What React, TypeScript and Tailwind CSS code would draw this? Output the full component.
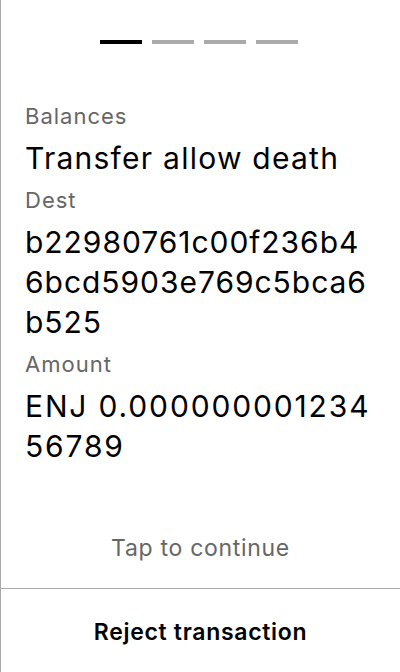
import React from "react";

export default function App() {
  return (
    <div
      className="flex h-[672px] w-[400px] flex-col border-l border-[#aaaaaa] bg-white text-black"
      style={{ fontFamily: "Inter, 'Noto Sans', sans-serif" }}
    >
      <div className="flex justify-center gap-[10px] pr-[3px] pt-10">
        <div className="h-1 w-[42px] bg-black" />
        <div className="h-1 w-[42px] bg-[#aaaaaa]" />
        <div className="h-1 w-[42px] bg-[#aaaaaa]" />
        <div className="h-1 w-[42px] bg-[#aaaaaa]" />
      </div>
      <div className="flex flex-1 flex-col gap-2 px-6 pt-[58px]">
        <div className="text-[22px] leading-[28px] tracking-[1px] text-[#666666]">Balances</div>
        <div className="break-all text-[30px] leading-[40px] tracking-[1.25px]">Transfer allow death</div>
        <div className="text-[22px] leading-[28px] tracking-[1px] text-[#666666]">Dest</div>
        <div className="break-all text-[30px] leading-[40px] tracking-[0.96px]">
          b22980761c00f236b46bcd5903e769c5bca6b525
        </div>
        <div className="text-[22px] leading-[28px] tracking-[1px] text-[#666666]">Amount</div>
        <div className="break-all text-[30px] leading-[40px] tracking-[1.85px]">ENJ 0.00000000123456789</div>
      </div>
      <div className="pb-[26px] text-center text-[23px] leading-[28px] tracking-[0.03em] text-[#666666]">
        Tap to continue
      </div>
      <div className="flex h-[84px] items-center justify-center border-t border-[#aaaaaa] pt-[3px] text-[23px] font-semibold tracking-[0.03em]">
        Reject transaction
      </div>
    </div>
  );
}
